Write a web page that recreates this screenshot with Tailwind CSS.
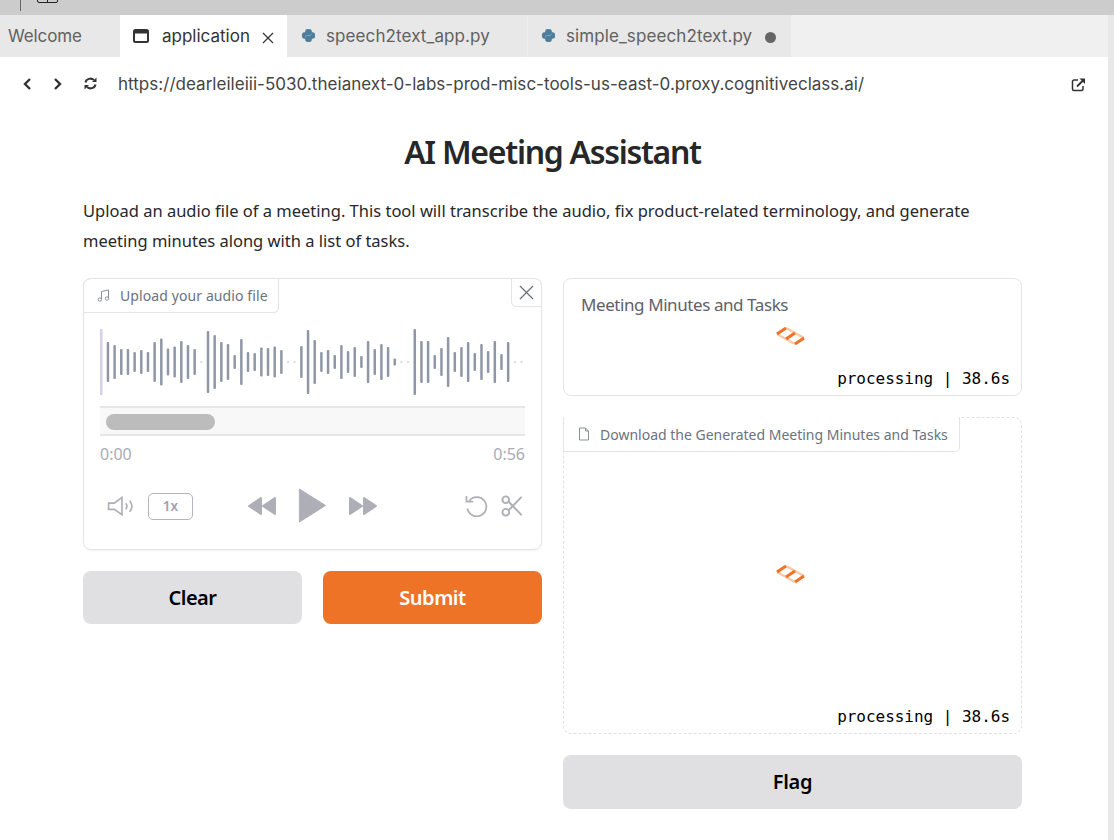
<!DOCTYPE html>
<html lang="en">
<head>
    <meta charset="UTF-8">
    <title>AI Meeting Assistant</title>
    <script src="https://cdn.jsdelivr.net/npm/@tailwindcss/browser@4"></script>
</head>
<body class="bg-white h-[840px] overflow-hidden font-['Noto_Sans',sans-serif] text-[#27272a]">
    <!-- window top bar -->
    <div class="h-[15px] bg-[#cccccc] flex items-start overflow-hidden">
        <div class="ml-5 w-px h-[11px] bg-[#666666]"></div>
        <div class="ml-4 w-[21px] h-[4px] -mt-px border border-[#222222] rounded-b-[2px] flex justify-center">
            <div class="w-px h-full bg-[#222222]"></div>
        </div>
    </div>

    <!-- scrollbar strip on the right edge -->
    <div class="absolute left-[1108px] top-[15px] w-[6px] h-[825px] bg-[#e8e8e8]"></div>

    <!-- editor tabs -->
    <div class="h-[42px] bg-[#f0f0f0] flex text-[17px] text-[#616161] font-['Inter',sans-serif]">
        <div class="w-[120px] bg-[#e8e8e8] pl-2 flex items-center"><span class="mt-[2px] tracking-[-0.1px]">Welcome</span></div>
        <div class="w-[167px] bg-white pl-[13px] flex items-center text-[#333333]">
            <svg class="w-[16px] h-[16px] mt-[-1px]" viewBox="0 0 16 16"><rect x="1" y="2" width="14" height="12" rx="1.500" fill="none" stroke="#333" stroke-width="2"/><rect x="1" y="2.500" width="14" height="3" fill="#333"/></svg>
            <span class="ml-[13px] mt-[2px]">application</span>
            <svg class="w-3 h-3 ml-[12px] mt-[3px]" viewBox="0 0 12 12"><path d="M1 1l10 10M11 1L1 11" stroke="#333" stroke-width="1.200"/></svg>
        </div>
        <div class="w-[240px] bg-[#e8e8e8] pl-[14px] flex items-center">
            <svg class="w-[15px] h-[15px] -mt-[2px]" viewBox="0 0 16 16"><path d="M4.500 3.500Q4.500 1 8 1Q11.500 1 11.500 3.500V4.500H12.500Q15 4.500 15 8Q15 11.500 12.500 11.500H11.500V12.500Q11.500 15 8 15Q4.500 15 4.500 12.500V11.500H3.500Q1 11.500 1 8Q1 4.500 3.500 4.500H4.500Z" fill="#4d7f9c"/><path d="M4.500 9.500L6.500 8H9.500L11.500 6.500" fill="none" stroke="#8fb0c4" stroke-width="0.800"/></svg>
            <span class="ml-[10px] mt-[2px] tracking-[0.1px]">speech2text_app.py</span>
        </div>
        <div class="w-[264px] bg-[#e8e8e8] border-l border-[#eeeeee] pl-[13px] flex items-center">
            <svg class="w-[15px] h-[15px] -mt-[2px]" viewBox="0 0 16 16"><path d="M4.500 3.500Q4.500 1 8 1Q11.500 1 11.500 3.500V4.500H12.500Q15 4.500 15 8Q15 11.500 12.500 11.500H11.500V12.500Q11.500 15 8 15Q4.500 15 4.500 12.500V11.500H3.500Q1 11.500 1 8Q1 4.500 3.500 4.500H4.500Z" fill="#4d7f9c"/><path d="M4.500 9.500L6.500 8H9.500L11.500 6.500" fill="none" stroke="#8fb0c4" stroke-width="0.800"/></svg>
            <span class="ml-[10px] mt-[2px] tracking-[0.1px]">simple_speech2text.py</span>
            <span class="ml-[13px] mt-[2px] w-[11px] h-[11px] rounded-full bg-[#666666]"></span>
        </div>
    </div>

    <!-- preview url bar -->
    <div class="h-[53px] flex items-center text-[#444444]">
        <svg class="ml-[22px] w-[10px] h-[14px]" viewBox="0 0 10 14"><path d="M8 2L3 7l5 5" fill="none" stroke="#333" stroke-width="2.400"/></svg>
        <svg class="ml-[21px] w-[10px] h-[14px]" viewBox="0 0 10 14"><path d="M2 2l5 5-5 5" fill="none" stroke="#333" stroke-width="2.400"/></svg>
        <svg class="ml-[21px] w-[13px] h-[13px]" viewBox="0 0 13 13"><path d="M1.500 5.500A5 4.500 0 0 1 10 3M11.500 7.500A5 4.500 0 0 1 3 10" fill="none" stroke="#333" stroke-width="2"/><path d="M12.500 0.500V5H8zM0.500 12.500V8H5z" fill="#333"/></svg>
        <span class="ml-[21px] mt-[2px] text-[17px] tracking-[0.03px] font-['Inter',sans-serif]">https://dearleileiii-5030.theianext-0-labs-prod-misc-tools-us-east-0.proxy.cognitiveclass.ai/</span>
        <svg class="absolute left-[1071px] top-[77px] w-[15px] h-[15px]" viewBox="0 0 15 15"><path d="M7 3H3a1.500 1.500 0 0 0-1.500 1.500V12A1.500 1.500 0 0 0 3 13.500h7.500A1.500 1.500 0 0 0 12 12V9" fill="none" stroke="#333" stroke-width="1.500"/><path d="M6 9.500L12 3.500" stroke="#333" stroke-width="1.800"/><path d="M8.500 1.500H14V7z" fill="#333"/></svg>
    </div>

    <!-- gradio app -->
    <div class="ml-[83px] w-[939px]">
        <h1 class="text-[32px] leading-[44px] font-semibold text-center mt-[20px] tracking-[-1.300px]">AI Meeting Assistant</h1>
        <p class="mt-[22px] text-[16.500px] leading-[30px]">Upload an audio file of a meeting. This tool will transcribe the audio, fix product-related terminology, and generate<br>meeting minutes along with a list of tasks.</p>

        <div class="mt-[22px] grid grid-cols-[459px_459px] gap-x-[21px] items-start">
            <!-- left column -->
            <div>
                <div class="relative h-[272px] border border-[#e4e4e7] rounded-[8px] shadow-xs">
                    <div class="absolute -left-px -top-px h-[35px] w-[196px] border border-[#e4e4e7] rounded-tl-[8px] rounded-br-[5px] flex items-center text-[14px] text-[#6b7280] tracking-[0.1px]">
                        <svg class="ml-[13px] w-[13px] h-[13px]" viewBox="0 0 13 13" fill="none" stroke="#8b8f98"><circle cx="2.800" cy="10.500" r="1.700"/><circle cx="10" cy="9.500" r="1.700"/><path d="M4.500 10.500V2.500l7-1.500v8.500"/></svg>
                        <span class="ml-[10px]">Upload your audio file</span>
                    </div>
                    <button class="absolute -right-px -top-px w-[31px] h-[29px] bg-white border border-[#e4e4e7] rounded-bl-[5px] rounded-tr-[8px] flex items-center justify-center">
                        <svg class="w-[15px] h-[15px]" viewBox="0 0 15 15"><path d="M1 1l13 13M14 1L1 14" stroke="#6b7280" stroke-width="1.300"/></svg>
                    </button>

                    <svg id="wave" class="absolute left-[16px] top-[49px] w-[425px] h-[68px]" viewBox="0 0 425 68"></svg>

                    <div class="absolute left-[16px] top-[127px] w-[425px] h-[30px] bg-[#f8f8f8] border-y-2 border-[#e6e6e6]">
                        <div class="ml-[6px] mt-[6px] w-[109px] h-4 rounded-full bg-[#bcbcbc]"></div>
                    </div>

                    <div class="absolute left-[16px] top-[163px] w-[425px] flex justify-between text-[16px] text-[#a9abb2]">
                        <span>0:00</span><span>0:56</span>
                    </div>

                    <!-- player controls -->
                    <svg class="absolute left-[23px] top-[217px] w-[28px] h-[21px]" viewBox="0 0 28 22" fill="none" stroke="#aeafb6" stroke-width="1.700"><path d="M1 7.500h6L15 1.500v18l-8-5.500H1z"/><path d="M19 7.500c1.500 2 1.500 4.500 0 6.500M23 5c3 3.500 3 8 0 11.500"/></svg>
                    <div class="absolute left-[64px] top-[214px] w-[45px] h-[27px] border border-[#b4b5bb] rounded-[5px] flex items-center justify-center text-[13.500px] font-semibold text-[#a1a1aa]">1x</div>
                    <svg class="absolute left-[163px] top-[217px] w-[30px] h-[20px]" viewBox="0 0 30 20" fill="#aeafb6" stroke="#aeafb6" stroke-width="2" stroke-linejoin="round"><path d="M14 2v16L2 10zM28 2v16L16 10z"/></svg>
                    <svg class="absolute left-[214px] top-[209px] w-[29px] h-[35px]" viewBox="0 0 29 36" fill="#aeafb6" stroke="#aeafb6" stroke-linejoin="round"><path d="M1 1v34l27-17z"/></svg>
                    <svg class="absolute left-[264px] top-[217px] w-[30px] h-[20px]" viewBox="0 0 30 20" fill="#aeafb6" stroke="#aeafb6" stroke-width="2" stroke-linejoin="round"><path d="M2 2v16l12-8zM16 2v16l12-8z"/></svg>
                    <svg class="absolute left-[380px] top-[216px] w-[24px] h-[22px]" viewBox="0 0 24 23" fill="none" stroke="#aeafb6" stroke-width="1.800"><path d="M5 6A10 10 0 1 1 3 14M2 1v6h7"/></svg>
                    <svg class="absolute left-[416px] top-[215px] w-[24px] h-[24px]" viewBox="0 0 24 25" fill="none" stroke="#aeafb6" stroke-width="2"><circle cx="5.500" cy="6" r="3.500"/><circle cx="5.500" cy="19" r="3.500"/><path d="M8.500 8L22 22M8.500 17L22 3"/></svg>
                </div>

                <div class="mt-[21px] grid grid-cols-2 gap-x-[21px]">
                    <button class="h-[53px] rounded-[8px] bg-[#e0e0e3] text-[20px] font-semibold text-black tracking-[-0.5px]">Clear</button>
                    <button class="h-[53px] rounded-[8px] bg-[#ee7326] text-[20px] font-semibold text-white tracking-[-0.5px]">Submit</button>
                </div>
            </div>

            <!-- right column -->
            <div>
                <div class="relative h-[118px] border border-[#e4e4e7] rounded-[8px] px-[17px] pt-[13px] text-[17px] text-[#5f6169] tracking-[-0.42px]">
                    Meeting Minutes and Tasks
                    <svg class="absolute left-[212px] top-[48px] w-[30px] h-[20px]" viewBox="0 0 30 20"><use href="#loader"/></svg>
                    <span class="absolute right-[11px] top-[88px] tracking-[-0.03px] text-black font-['DejaVu_Sans_Mono',monospace] text-[16px]">processing | 38.6s</span>
                </div>

                <div class="relative mt-[21px] h-[317px] border border-dashed border-[#e0e0e3] rounded-[8px]">
                    <div class="absolute -left-px -top-px h-[35px] w-[397px] bg-white border border-[#e4e4e7] border-t-0 rounded-br-[5px] flex items-center text-[14px] text-[#6b7280]">
                        <svg class="ml-[13px] w-[14px] h-[14px]" viewBox="0 0 14 14" fill="none" stroke="#8b8f98"><path d="M2.500 1h6l3 3v9h-9zM8.500 1v3h3"/></svg>
                        <span class="ml-[9px]">Download the Generated Meeting Minutes and Tasks</span>
                    </div>
                    <svg class="absolute left-[212px] top-[147px] w-[30px] h-[20px]" viewBox="0 0 30 20"><use href="#loader"/></svg>
                    <span class="absolute right-[11px] top-[287px] tracking-[-0.03px] text-black font-['DejaVu_Sans_Mono',monospace] text-[16px]">processing | 38.6s</span>
                </div>

                <button class="mt-[21px] w-full h-[54px] rounded-[8px] bg-[#e0e0e3] text-[20px] font-semibold text-black tracking-[-0.3px]">Flag</button>
            </div>
        </div>
    </div>

    <svg class="hidden">
        <g id="loader">
            <path d="M10 1l18 10M1 7l18 10" fill="none" stroke="#f9c9a8" stroke-width="2.500"/>
            <path d="M1 7l9-6M10 12l9-6M19 17l9-6" stroke="#ee7326" stroke-width="3"/>
        </g>
    </svg>

    <script>
        // waveform heights, 0 = silent dash
        const bars = [40,34,26,26,20,24,20,40,47,27,31,42,34,26,0,62,54,40,36,14,46,20,18,29,28,31,24,0,0,32,64,44,20,24,14,34,22,30,12,42,26,36,30,7,0,0,66,42,42,14,28,50,20,30,40,18,36,22,42,16,40,0,0];
        const wave = document.getElementById('wave');
        let rects = '<rect x="0" y="1" width="2.500" height="66" fill="#d6cfe8"/>';
        bars.forEach((h, i) => {
            const x = 6.700 + i * 6.670;
            const height = h || 1;
            rects += `<rect x="${x}" y="${34 - height / 2}" width="2.500" height="${height}" rx="1" fill="${h ? '#8f96a6' : '#b4b8c0'}"/>`;
        });
        wave.innerHTML = rects;
    </script>
</body>
</html>
